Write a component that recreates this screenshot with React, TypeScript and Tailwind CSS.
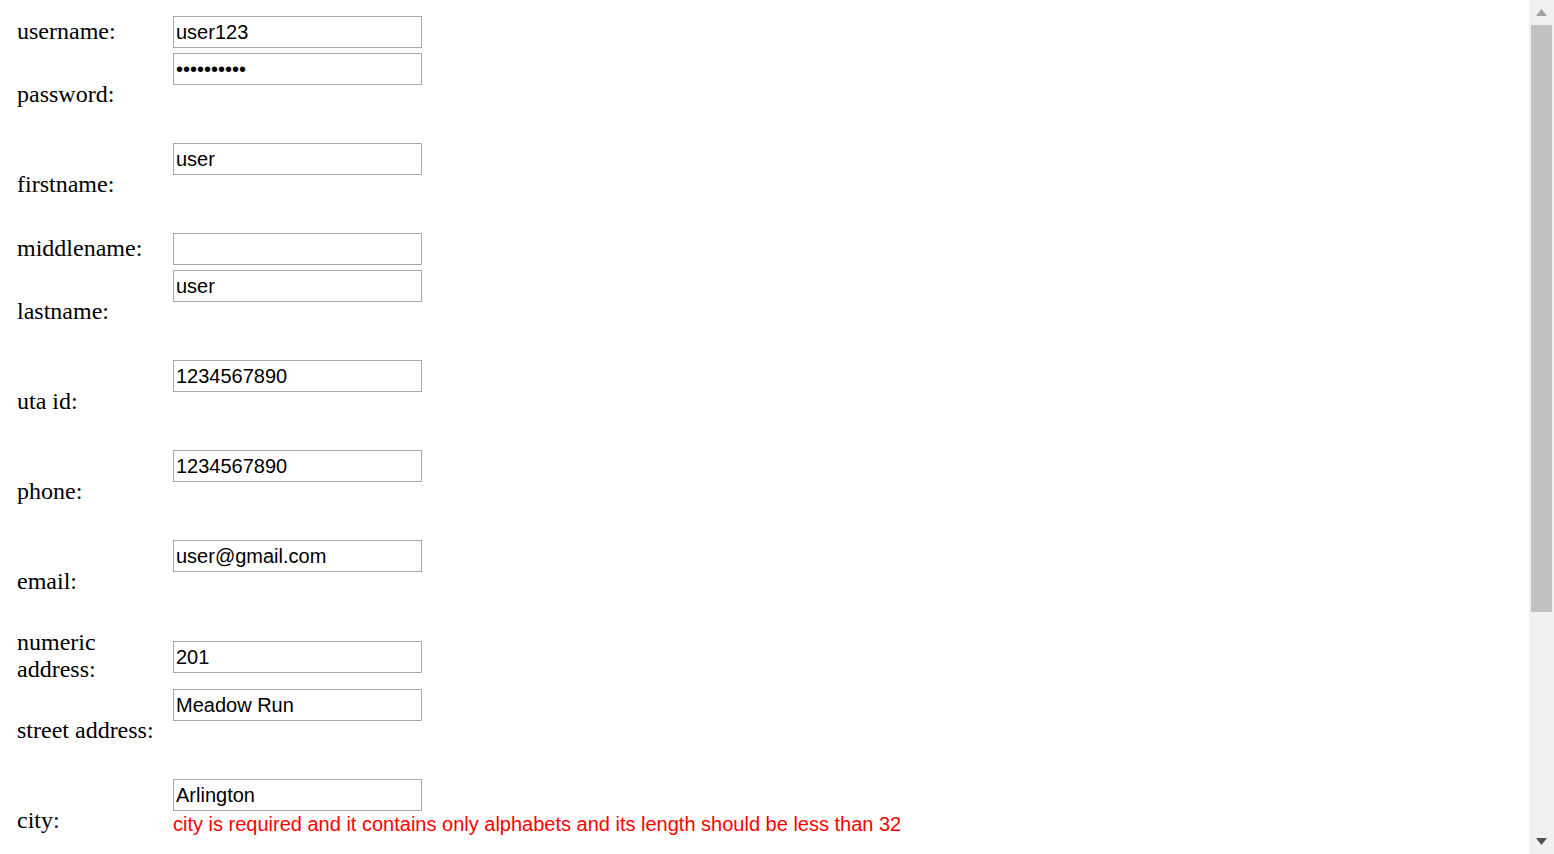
import React from "react";

type Row = { label: React.ReactNode; value: string; type?: string; extra: boolean; error?: string };

const rows: Row[] = [
  { label: "username:", value: "user123", extra: false },
  { label: "password:", value: "1234567890", type: "password", extra: true },
  { label: "firstname:", value: "user", extra: true },
  { label: "middlename:", value: "", extra: false },
  { label: "lastname:", value: "user", extra: true },
  { label: "uta id:", value: "1234567890", extra: true },
  { label: "phone:", value: "1234567890", extra: true },
  { label: "email:", value: "user@gmail.com", extra: true },
  { label: (<>numeric<br />address:</>), value: "201", extra: false },
  { label: "street address:", value: "Meadow Run", extra: true },
  {
    label: "city:",
    value: "Arlington",
    extra: true,
    error: "city is required and it contains only alphabets and its length should be less than 32",
  },
];

function Field({ row }: { row: Row }) {
  return (
    <>
      <div className="flex items-center text-[24px] leading-[27px] text-black">
        <span className="-mt-[1px] mb-[1px] font-['Liberation_Serif',serif]">{row.label}</span>
      </div>
      <div className="flex flex-col justify-center">
        <input
          readOnly
          type={row.type ?? "text"}
          defaultValue={row.value}
          className="w-[249px] h-[32px] border border-[#a9a9a9] px-[2px] text-[20px] text-black font-['Liberation_Sans',Arial,sans-serif] outline-none bg-white"
        />
        {row.extra && (
          <div className="h-[53px] whitespace-nowrap pt-[1px] text-[20px] leading-[25px] text-[#ff0000] font-['Liberation_Sans',Arial,sans-serif]">
            {row.error ?? ""}
          </div>
        )}
      </div>
    </>
  );
}

export default function App() {
  return (
    <div className="flex h-[854px] w-full overflow-hidden bg-white">
      <div className="flex-1 overflow-hidden">
        <div className="grid grid-cols-[156px_auto] gap-y-[5px] pl-[17px] pt-[16px] w-max">
          {rows.map((r, i) => (
            <Field key={i} row={r} />
          ))}
        </div>
      </div>
      <div className="flex w-[25px] flex-col bg-[#f1f1f1]">
        <div className="flex h-[25px] items-center justify-center">
          <svg width="11" height="7" viewBox="0 0 11 7">
            <polygon points="5.5,0 11,7 0,7" fill="#a3a3a3" />
          </svg>
        </div>
        <div className="mx-[2px] h-[587px] bg-[#c1c1c1]" />
        <div className="flex-1" />
        <div className="flex h-[25px] items-center justify-center">
          <svg width="11" height="7" viewBox="0 0 11 7">
            <polygon points="0,0 11,0 5.5,7" fill="#505050" />
          </svg>
        </div>
      </div>
    </div>
  );
}
